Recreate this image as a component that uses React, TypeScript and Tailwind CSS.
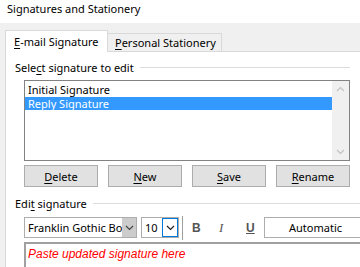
import { FC, ReactNode } from 'react';

const ui = { fontFamily: '"Segoe UI", "Noto Sans", "Open Sans", sans-serif' };

const U: FC<{ children: ReactNode }> = ({ children }) => (
  <span className="underline underline-offset-2">{children}</span>
);

const GroupLabel: FC<{ children: ReactNode; lineClass?: string }> = ({ children, lineClass = 'mr-[10px]' }) => (
  <div className="flex items-center gap-[6px] pl-[9px] h-[16px] shrink-0">
    <span className="text-[11px] leading-none text-black whitespace-nowrap">{children}</span>
    <div className={`h-px flex-1 bg-[#dcdcdc] ${lineClass}`} />
  </div>
);

const Button: FC<{ children: ReactNode }> = ({ children }) => (
  <button className="h-[22px] w-[74px] border border-[#adadad] bg-[#e1e1e1] text-[11px] leading-none text-black">
    {children}
  </button>
);

const Chevron: FC<{ up?: boolean; color?: string }> = ({ up, color = '#444' }) => (
  <svg width="9" height="6" viewBox="0 0 9 6" fill="none">
    <path d={up ? 'M1 5 L4.5 1.5 L8 5' : 'M1 1 L4.5 4.5 L8 1'} stroke={color} strokeWidth="1.2" />
  </svg>
);

export default function App() {
  return (
    <div className="w-[360px] h-[267px] overflow-hidden bg-[#f0f0f0] flex flex-col" style={ui}>
      <div className="h-[23px] shrink-0 bg-white pl-[7px] pt-[1px] text-[11px] leading-[15px] text-black">
        Signatures and Stationery
      </div>

      <div className="flex flex-col flex-1 min-h-0 pl-[5px] pt-[7px]">
        {/* tabs */}
        <div className="flex items-end h-[22px] shrink-0 relative z-10">
          <div className="h-[22px] w-[103px] bg-white border border-b-0 border-[#d9d9d9] pl-[8px] pt-[3px] text-[11px] leading-[15px] text-black whitespace-nowrap">
            <U>E</U>-mail Signature
          </div>
          <div className="h-[19px] w-[114px] border border-l-0 border-b-0 border-[#d9d9d9] pl-[7px] pt-[1px] text-[11px] leading-[15px] text-black whitespace-nowrap">
            <U>P</U>ersonal Stationery
          </div>
        </div>

        <div className="flex-1 min-h-0 overflow-hidden bg-white border-l border-t border-[#d9d9d9] -mt-px pt-[7px] flex flex-col">
          <GroupLabel>
            Sele<U>c</U>t signature to edit
          </GroupLabel>

          <div className="ml-[18px] mt-[5px] w-[326px] h-[81px] shrink-0 border border-[#828282] flex">
            <div className="flex-1 pt-[2px] text-[11px] leading-[13.5px]">
              <div className="pl-[3px] text-black">Initial Signature</div>
              <div className="pl-[3px] bg-[#3399ff] text-white">Reply Signature</div>
            </div>
            <div className="w-[17px] bg-[#f0f0f0] flex flex-col justify-between items-center py-[5px]">
              <Chevron up color="#c2c2c2" />
              <Chevron color="#c2c2c2" />
            </div>
          </div>

          <div className="ml-[18px] mt-[4px] flex gap-[10px] shrink-0">
            <Button>
              <U>D</U>elete
            </Button>
            <Button>
              <U>N</U>ew
            </Button>
            <Button>
              <U>S</U>ave
            </Button>
            <Button>
              <U>R</U>ename
            </Button>
          </div>

          <div className="mt-[8px] shrink-0">
            <GroupLabel lineClass="mr-0">
              Edi<U>t</U> signature
            </GroupLabel>
          </div>

          <div className="ml-[18px] mt-[6px] flex items-center h-[21px] shrink-0">
            <div className="h-[21px] w-[113px] border border-[#adadad] bg-white flex">
              <div className="flex-1 overflow-hidden whitespace-nowrap pl-[3px] text-[11px] leading-[19px] text-black">
                Franklin Gothic Book
              </div>
              <div className="w-[14px] bg-[#cccccc] flex items-center justify-center">
                <Chevron />
              </div>
            </div>
            <div className="ml-[4px] h-[21px] w-[38px] border border-[#adadad] bg-white flex">
              <div className="flex-1 pl-[3px] text-[11px] leading-[19px] text-black">10</div>
              <div className="w-[16px] border border-[#0078d7] bg-white flex items-center justify-center">
                <Chevron color="#222" />
              </div>
            </div>
            <div className="ml-[3px] h-[24px] w-px bg-[#a0a0a0]" />
            <div className="ml-[9px] w-[12px] text-[12px] font-bold text-[#555]" style={{ fontFamily: '"Liberation Sans", Arial, sans-serif' }}>
              B
            </div>
            <div className="ml-[15px] w-[12px] text-[13px] italic text-[#555]" style={{ fontFamily: '"Liberation Serif", serif' }}>
              I
            </div>
            <div className="ml-[15px] w-[12px] text-[12px] font-bold underline text-[#555]" style={{ fontFamily: '"Liberation Sans", Arial, sans-serif' }}>
              U
            </div>
            <div className="ml-[6px] h-[21px] flex-1 border border-r-0 border-[#adadad] bg-white pl-[24px] text-[11px] leading-[19px] text-black">
              Automatic
            </div>
          </div>

          <div className="ml-[18px] mt-[4px] flex-1 border-l-2 border-t-2 border-[#a0a0a0] bg-white pl-[2px] pt-[1px] leading-[14px]">
            <span className="text-[12px] leading-[14px] italic text-[#ff0000]" style={{ fontFamily: '"Liberation Sans", Arial, sans-serif' }}>
              Paste updated signature here
            </span>
          </div>
        </div>
      </div>
    </div>
  );
}
